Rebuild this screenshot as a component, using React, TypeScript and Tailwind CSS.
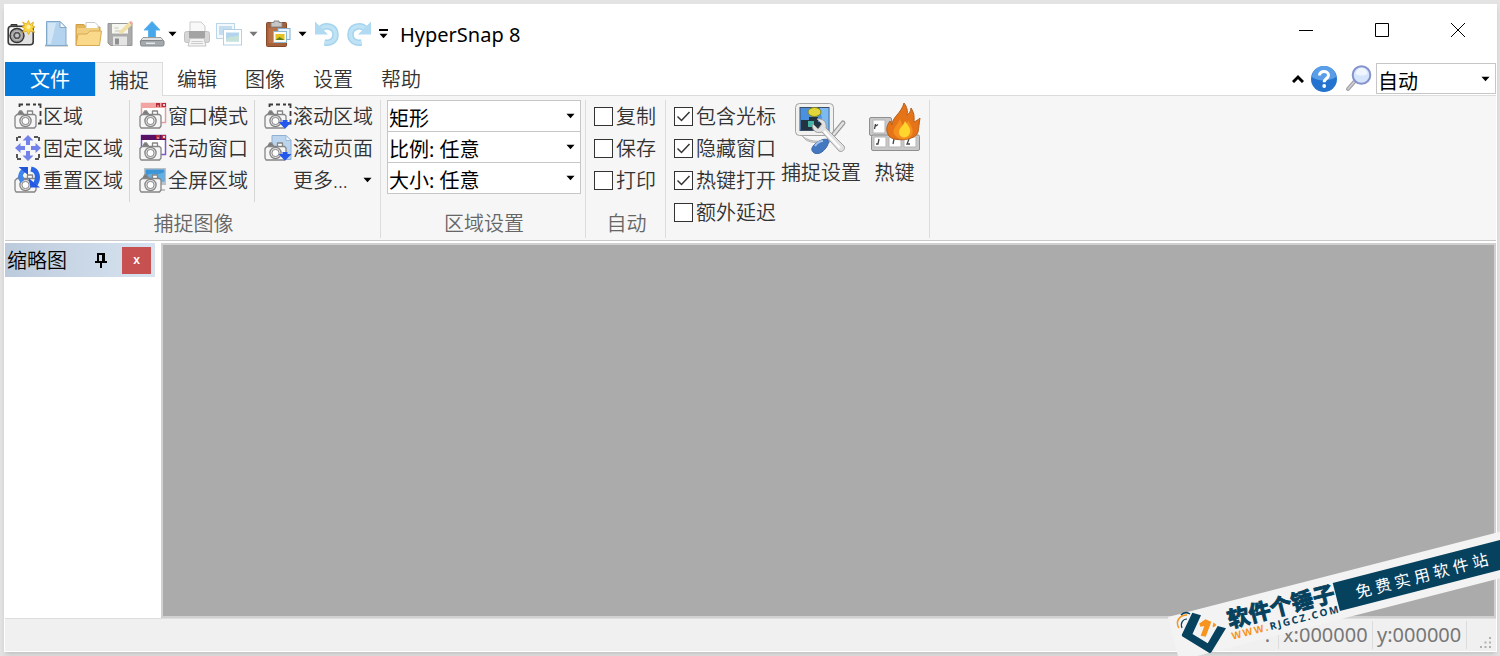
import type { ReactNode } from 'react'

const tabs = ['编辑', '图像', '设置', '帮助']

/* ---------- small glyphs ---------- */

function Caret({ className = 'text-black' }: { className?: string }) {
  return (
    <svg viewBox="0 0 10 6" className={`w-[9px] h-[6px] shrink-0 ${className}`} fill="currentColor">
      <path d="M0.5 0.5h9L5 5.6z" />
    </svg>
  )
}

function Icon({ children, size = 'size-7' }: { children: ReactNode; size?: string }) {
  return (
    <svg viewBox="0 0 28 28" className={`${size} shrink-0`} fill="none">
      {children}
    </svg>
  )
}

// outline camera shared by all the capture commands
function Camera() {
  return (
    <g stroke="#858585" strokeWidth="1.3" strokeLinejoin="round">
      <rect x="13.500" y="9" width="5" height="4" fill="#fff" />
      <path d="M4 12l1.600-3h2L9.600 12z" fill="#777" />
      <path d="M3 12.500h17.500l1.500 1.500v10l-1.500 2H2l-1-2V14.500z" fill="#f6f6f6" />
      <circle cx="11.500" cy="19" r="5.600" fill="#e4e4e4" />
      <circle cx="11.500" cy="19" r="3.600" fill="#fff" strokeWidth="1" />
    </g>
  )
}

const Dashes = () => (
  <path
    d="M5.500 5V2.500H9M12 2.500h4M19 2.500h3M24 2.500h2.500V6M26.500 9v5M26.500 17.500v4H24"
    stroke="#3c3c3c"
    strokeWidth="1.8"
  />
)

const DownArrow = () => <path d="M14.500 20h4v-2h5v2h4L21 26.800z" fill="#2457ec" />

const RegionIcon = () => (
  <Icon>
    <Dashes />
    <Camera />
  </Icon>
)

const FixedIcon = () => (
  <Icon>
    <path
      d="M3 7V3h4M20 3h5v4M25 20v5h-5M7 25H3v-5"
      stroke="#555"
      strokeWidth="2"
      strokeDasharray="4 1"
    />
    <path
      d="M14 1l5.500 5.500h-3.500v4.500h-4V6.500H8.500zM14 27l5.500-5.500h-3.500V17h-4v4.500H8.500zM1 14l5.500-5v3H11v4H6.500v3zM27 14l-5.500-5v3H17v4h4.500v3z"
      fill="#7382ea"
    />
  </Icon>
)

const RepeatIcon = () => (
  <Icon>
    <Camera />
    <path d="M12 3C6 6 5 11 8.500 15.500" stroke="#3f86ee" strokeWidth="4.500" />
    <path d="M4.500 1h9.500v8z" fill="#2457d8" />
    <path d="M17 3c7 1.500 8 9 4.500 15" stroke="#2a66e8" strokeWidth="5" />
    <path d="M14.500 12l2 9.500h9.500z" fill="#2457e4" />
  </Icon>
)

function WindowIcon({ bar, edge }: { bar: string; edge: string }) {
  return (
    <Icon>
      <rect x="2.500" y="1.500" width="24" height="19" fill="#fff" stroke={edge} strokeWidth="1.500" />
      <path d="M2 1h25v5H2z" fill={bar} />
      <path d="M17 1h4v4h-4zM22.500 1h4.500v4h-4.500z" fill="#b52b3b" />
      <path d="M18 4h2M24 2l2 2M26 2l-2 2" stroke="#fff" strokeWidth=".8" />
      <Camera />
    </Icon>
  )
}

const ScreenIcon = () => (
  <Icon>
    <path d="M5 2h22v17H5z" fill="#b9c2c9" />
    <path d="M6.500 3.500h19v12h-19z" fill="#3c95d6" />
    <path d="M8 9c6-3 11 1 17-3v9H8z" fill="#62b0e4" />
    <path d="M17 19h5v4h4v2H15z" fill="#c4c4c4" />
    <Camera />
  </Icon>
)

const ScrollRegionIcon = () => (
  <Icon>
    <Dashes />
    <Camera />
    <DownArrow />
  </Icon>
)

const ScrollPageIcon = () => (
  <Icon>
    <path d="M8 1.500h14l5 5v19H8z" fill="#bcd5ee" stroke="#8eb0d2" />
    <path d="M22 1.500v5h5z" fill="#f2f8fd" stroke="#8eb0d2" strokeWidth=".8" />
    <Camera />
    <DownArrow />
  </Icon>
)

/* ---------- quick access icons ---------- */

const AppIcon = () => (
  <Icon>
    <path d="M4 7V4.500h6V7" fill="#777" stroke="#333" />
    <rect x="1.200" y="6.200" width="25" height="18.500" rx="3" fill="#e2e2e2" stroke="#3a3a3a" strokeWidth="1.600" />
    <path d="M3 9h20" stroke="#fff" strokeWidth="1.500" />
    <circle cx="10" cy="15.500" r="7" fill="#a2a2a2" stroke="#333" strokeWidth="1.400" />
    <circle cx="10" cy="15.500" r="4.300" fill="#555" stroke="#ccc" />
    <circle cx="10" cy="15.500" r="2" fill="#c4c4c4" />
    <path
      d="M21.500 .5l1.500 4 3.500-2.500-1 4 2.500 1-2.500 1.500 2 4-4-1.500-2 3.500-2-3.500-4 1.500 2-4-2.500-1.500 2.500-1.500-2-3.500 4 2z"
      fill="#fbd545"
      stroke="#d5a013"
      strokeWidth=".7"
    />
    <circle cx="21.500" cy="7" r="2" fill="#fff3a8" />
  </Icon>
)

const NewIcon = () => (
  <Icon>
    <path d="M3 25.500h23" stroke="#a8b4bd" strokeWidth="2" />
    <path d="M4.500 1.500h13.500l6 6V25.500H4.500z" fill="#b3d3ef" stroke="#82a9c9" />
    <path d="M6 3h8L9 24H6z" fill="#d3e6f6" />
    <path d="M18 1.500v6h6z" fill="#f3f9fe" stroke="#82a9c9" />
  </Icon>
)

const OpenIcon = () => (
  <Icon>
    <path d="M2 25V4.500h8l2 2.500h14v6z" fill="#e3b558" stroke="#cf9f48" />
    <path d="M12 2.500h9l3 3V12H12z" fill="#fff" stroke="#c9c9c9" />
    <path d="M3 8h22v8H3z" fill="#f2cf80" />
    <path d="M2 25.500L4 14h9l3-3h11.500l-2 14.500z" fill="#fad98a" stroke="#d9a94f" />
  </Icon>
)

const SaveIcon = () => (
  <Icon>
    <path d="M2 3.500h24v22H4.500L2 23z" fill="#ababab" stroke="#969696" />
    <path d="M6 4h16v9.500H6z" fill="#f6f6f0" />
    <path d="M7 16.500h14v9H7z" fill="#e4e4e4" />
    <path d="M9 18.500h4v6H9z" fill="#8f8f8f" />
    <path d="M8.500 8h4M9 11h6" stroke="#c6c6b0" />
    <path d="M13 12L23 2l3 3-9 8-4 1z" fill="#f1dfa4" />
    <path d="M23 2l2-1 2 2-1 2z" fill="#f0a8a0" />
  </Icon>
)

const UploadIcon = () => (
  <Icon>
    <path d="M14 1.500l8 8.500h-4.500v8h-7v-8H6z" fill="#46a8ea" stroke="#5fb2ea" />
    <path d="M5 17.500h18l3 4H2z" fill="#e0e0e0" stroke="#9c9c9c" />
    <rect x="2.500" y="20.500" width="23.500" height="5.500" rx="1.500" fill="#a3a9ad" stroke="#81878b" />
    <path d="M8 23.300h9" stroke="#e4e9eb" strokeWidth="1.500" />
  </Icon>
)

const PrintIcon = () => (
  <Icon>
    <path d="M7 2h11l4 4v6H7z" fill="#f8f8f8" stroke="#cbcbcb" />
    <rect x="1.500" y="11.500" width="25" height="11" rx="2" fill="#d6d6d6" stroke="#c0c0c0" />
    <path d="M6 11h16v7H6z" fill="#a3a3a3" />
    <path d="M7 18.500h14l2 7.500H5z" fill="#f4f4f4" stroke="#c5c5c5" />
    <path d="M8.500 21.500h11M8 23.500h12" stroke="#ccc" />
  </Icon>
)

const WindowsIcon = () => (
  <Icon>
    <rect x="1.500" y="3.500" width="18" height="15" fill="#f2f8fc" stroke="#bcd6e9" />
    <path d="M4 6h13v9H4z" fill="#c5deef" />
    <rect x="8.500" y="9.500" width="18" height="15.500" fill="#fff" stroke="#b4d0e5" />
    <path d="M11 12.500h13v9H11z" fill="#b2d4ec" />
    <path d="M11 19c5-4 8-1 13-4v6.500H11z" fill="#c7e2d9" />
  </Icon>
)

const PasteIcon = () => (
  <Icon>
    <rect x="2.500" y="2.500" width="20" height="24" rx="1" fill="#a5613a" stroke="#864a28" />
    <path d="M4.500 8h15v15h-15z" fill="#b87148" />
    <path d="M7 2.500h3V1h5v1.500h3V7H7z" fill="#c7c7c7" stroke="#858585" />
    <rect x="14" y="8.500" width="12" height="11" fill="#e8f3fb" stroke="#7fb1d7" />
    <rect x="9.500" y="11.500" width="13" height="11" fill="#fffdf2" stroke="#8fb8d5" />
    <path d="M11.500 14h9v6h-9z" fill="#e4c321" />
    <path d="M11.500 20l4-3 5 3z" fill="#5d7d1f" />
  </Icon>
)

const UndoIcon = () => (
  <Icon>
    <path d="M7 9.500C12 4 22.500 6 22.500 14.500c0 6.500-5 9-11 8" stroke="#a5d4ee" strokeWidth="6.500" />
    <path d="M7 9.500C12 4 22.500 6 22.500 14.500c0 6.500-5 9-11 8" stroke="#bfe2f5" strokeWidth="3.500" />
    <path d="M2 1.500V14.500h13z" fill="#b0daf1" />
  </Icon>
)

const RedoIcon = () => (
  <Icon>
    <path d="M21 9.500C16 4 5.500 6 5.500 14.500c0 6.500 5 9 11 8" stroke="#a5d4ee" strokeWidth="6.500" />
    <path d="M21 9.500C16 4 5.500 6 5.500 14.500c0 6.500 5 9 11 8" stroke="#bfe2f5" strokeWidth="3.500" />
    <path d="M26 1.500V14.500H13z" fill="#b0daf1" />
  </Icon>
)

/* ---------- big ribbon icons ---------- */

const CaptureSettingsIcon = () => (
  <svg viewBox="0 0 52 52" className="size-[52px]" fill="none">
    <path d="M7 33c8 7 24 7 31 0l-4 5c-7 3-18 2-23-1z" fill="#dadada" stroke="#b5b5b5" />
    <rect x="0.500" y="0.500" width="38" height="32" rx="4" fill="#f1f1ef" stroke="#a3a3a3" />
    <rect x="5" y="4.500" width="29" height="23" fill="#4a90de" stroke="#3d4f66" />
    <path d="M25 5h8.500v22H29z" fill="#7dbaf0" />
    <ellipse cx="19.500" cy="9" rx="6.500" ry="4.500" fill="#e2d63a" stroke="#7f8422" />
    <path d="M6 17h8v-3h9v5h5v8H6z" fill="#23333f" />
    <path d="M13 18h6v6h-6z" fill="#43b3a5" />
    <path d="M48 20l-14 17" stroke="#9a9a9a" strokeWidth="5" strokeLinecap="round" />
    <path d="M48 20l-14 17" stroke="#e3e3e3" strokeWidth="2.500" strokeLinecap="round" />
    <path d="M33 37c2 3-3 11-8 13-6 2-9-2-8-5 2-5 12-11 16-8z" fill="#4479c2" stroke="#3a66a6" />
    <path d="M20 43c2-3 5-5 8-5" stroke="#a6c4ea" strokeWidth="2" />
    <path
      d="M18 21c-2 6 3 10 9 8l17 19c3 2 7-2 5-5L31 25c1-6-3-10-9-9l5 5-4 5z"
      fill="#e2e2e2"
      stroke="#a0a0a0"
    />
    <path d="M29 28l16 17" stroke="#fff" strokeWidth="2" />
  </svg>
)

const HotkeyIcon = () => (
  <svg viewBox="0 0 52 52" className="size-[52px]" fill="none">
    <rect x="0.500" y="14.500" width="22" height="18" rx="1.500" fill="#c8c8c8" stroke="#8f8f8f" />
    <rect x="2.500" y="32" width="48" height="15.500" rx="1.500" fill="#c8c8c8" stroke="#8f8f8f" />
    <path d="M4 17h12v13H4zM5 34h12v10H5zM20 34h12v10H20zM35 34h12v10H35z" fill="#fff" stroke="#b5b5b5" />
    <path d="M6.500 21l-1 5M6 23.500l3-2M10 36l-1 5h-2M25 36l-1 5M40 36l-2 5h3" stroke="#444" strokeWidth="1.300" />
    <path
      d="M20 33c-4-6-2-11 1-15l2 4c0-8 9-11 12-22 3 4 4 8 3 12 2-1 4-4 4-7 4 6 3 10 3 14 2-1 4-2 6-4-1 6-1 9-2 14-2 9-25 10-29 4z"
      fill="#e57318"
      stroke="#b5601c"
    />
    <path d="M25 31c-2-6 3-8 6-15 2 4 2 7 3 9 3-2 4-4 5-8 4 7 8 13 1 18-5 3-12 1-15-4z" fill="#f58e1d" />
    <path d="M30 30c0-6 4-6 6-12 4 6 7 8 4 14-3 4-9 3-10-2z" fill="#ffd52e" />
  </svg>
)

/* ---------- ribbon pieces ---------- */

function Command({ icon, label }: { icon: ReactNode; label: string }) {
  return (
    <button type="button" className="flex h-8 items-center gap-px whitespace-nowrap">
      {icon}
      <span className="pt-0.5">{label}</span>
    </button>
  )
}

function Combo({ name, value, className = '' }: { name: string; value: string; className?: string }) {
  return (
    <div className={`relative flex items-center border border-[#c6c6c6] bg-white text-black ${className}`}>
      <select
        aria-label={name}
        className="h-full w-full appearance-none bg-transparent px-px pt-1 font-normal outline-none"
      >
        <option>{value}</option>
      </select>
      <span className="pointer-events-none absolute right-[5px]">
        <Caret />
      </span>
    </div>
  )
}

function Check({ label, checked = false }: { label: string; checked?: boolean }) {
  return (
    <label className="flex h-8 items-center gap-[3px] whitespace-nowrap">
      <span className="relative flex">
        <input
          type="checkbox"
          defaultChecked={checked}
          className="peer size-[19px] appearance-none border border-[#333] bg-white"
        />
        <svg
          viewBox="0 0 19 19"
          className="pointer-events-none absolute inset-0 hidden size-[19px] peer-checked:block"
          fill="none"
        >
          <path d="M3.500 9.500l4 4 8-8.500" stroke="#333" strokeWidth="1.500" />
        </svg>
      </span>
      <span className="pt-0.5">{label}</span>
    </label>
  )
}

function Group({ title, children, className = '' }: { title?: string; children: ReactNode; className?: string }) {
  return (
    <section className={`flex flex-col justify-between border-r border-[#dcdcdc] ${className}`}>
      {children}
      {title && <h2 className="pl-0.5 pt-px text-center leading-7 text-[#666]">{title}</h2>}
    </section>
  )
}

function TitleBar() {
  const tool = 'flex w-8 justify-center'
  return (
    <header className="flex h-[57px] items-start justify-between">
      <div className="flex h-[58px] items-center">
        <span className="mr-1 flex w-[31px] justify-center"><AppIcon /></span>
        <button type="button" aria-label="新建" className={tool}><NewIcon /></button>
        <button type="button" aria-label="打开" className={tool}><OpenIcon /></button>
        <button type="button" aria-label="保存" className={tool}><SaveIcon /></button>
        <button type="button" aria-label="上传" className={tool}><UploadIcon /></button>
        <button type="button" aria-label="上传选项" className="mr-1 flex"><Caret /></button>
        <button type="button" aria-label="打印" className={tool}><PrintIcon /></button>
        <button type="button" aria-label="复制窗口" className={tool}><WindowsIcon /></button>
        <button type="button" aria-label="窗口选项" className="mx-1 flex"><Caret className="text-[#777]" /></button>
        <button type="button" aria-label="粘贴" className={tool}><PasteIcon /></button>
        <button type="button" aria-label="粘贴选项" className="mx-1 flex"><Caret /></button>
        <button type="button" aria-label="撤销" className={tool}><UndoIcon /></button>
        <button type="button" aria-label="重做" className={tool}><RedoIcon /></button>
        <button type="button" aria-label="自定义工具栏" className="ml-1 flex flex-col items-center gap-0.5">
          <span className="h-0.5 w-[9px] bg-black" />
          <Caret />
        </button>
        <h1 className="ml-3 pt-0.5 font-normal text-black">HyperSnap 8</h1>
      </div>
      <div className="flex h-[50px]">
        {[
          ['最小化', 'M2 7.500h14'],
          ['最大化', 'M2.500 .5h13v13h-13z'],
          ['关闭', 'M2 0l14 14M16 0L2 14'],
        ].map(([name, d]) => (
          <button key={name} type="button" aria-label={name} className="flex w-[76px] items-center justify-center">
            <svg viewBox="0 0 18 14" className="h-[14px] w-[18px]" fill="none" stroke="#000">
              <path d={d} />
            </svg>
          </button>
        ))}
      </div>
    </header>
  )
}

function TabRow() {
  return (
    <nav className="flex h-[34px] items-stretch">
      <button type="button" className="w-[90px] bg-[#0579d9] pt-0.5 font-normal text-white">文件</button>
      <button type="button" className="w-[68px] border-x border-t border-[#dcdcdc] bg-[#f6f6f6] pt-0.5">捕捉</button>
      <div className="flex flex-1 border-b border-[#dcdcdc]">
        {tabs.map((t) => (
          <button key={t} type="button" className="w-[68px] pt-0.5">{t}</button>
        ))}
        <div className="ml-auto flex items-center">
          <button type="button" aria-label="折叠功能区" className="mr-1.5">
            <svg viewBox="0 0 12 9" className="h-[9px] w-3" fill="none">
              <path d="M1 8l5-5 5 5" stroke="#000" strokeWidth="3" />
            </svg>
          </button>
          <button type="button" aria-label="帮助" className="mr-1.5">
            <Icon>
              <circle cx="14" cy="14" r="13" fill="#2373cf" />
              <path d="M2 12a12 11 0 0124 0C20 16 8 17 2 12z" fill="#5a9ee8" />
              <path
                d="M9.500 10.500C9.500 5 18.500 5.500 18.500 10.200c0 3.300-4.300 3.300-4.300 7"
                stroke="#fff"
                strokeWidth="3"
              />
              <circle cx="14.200" cy="21" r="1.900" fill="#fff" />
            </Icon>
          </button>
          <button type="button" aria-label="缩放" className="mr-1">
            <Icon>
              <path d="M4 24l7-8" stroke="#a2a2a8" strokeWidth="4" strokeLinecap="round" />
              <path d="M4 24l7-8" stroke="#cfcfd3" strokeWidth="1.500" strokeLinecap="round" />
              <circle cx="17.500" cy="10" r="8.800" fill="#d5e5fb" stroke="#8592cc" strokeWidth="2" />
              <path d="M11.500 9a6 6 0 0112 0c-4 2-8 2-12 0z" fill="#f0f6ff" />
            </Icon>
          </button>
          <Combo name="缩放比例" value="自动" className="h-[31px] w-[120px]" />
        </div>
      </div>
    </nav>
  )
}

function Ribbon() {
  return (
    <div className="flex h-[145px] border-b border-[#c9c9c9] bg-[#f6f6f6] pb-0.5 pt-1">
      <Group title="捕捉图像">
        <div className="flex">
          <div className="w-[125px] border-r border-[#d6d6d6] pb-1.5 pl-[9px]">
            <Command icon={<RegionIcon />} label="区域" />
            <Command icon={<FixedIcon />} label="固定区域" />
            <Command icon={<RepeatIcon />} label="重置区域" />
          </div>
          <div className="w-[125px] border-r border-[#d6d6d6] pb-1.5 pl-[9px]">
            <Command icon={<WindowIcon bar="#f3a4a2" edge="#e0a0a0" />} label="窗口模式" />
            <Command icon={<WindowIcon bar="#5a1064" edge="#7a5ac4" />} label="活动窗口" />
            <Command icon={<ScreenIcon />} label="全屏区域" />
          </div>
          <div className="w-[125px] pl-[9px]">
            <Command icon={<ScrollRegionIcon />} label="滚动区域" />
            <Command icon={<ScrollPageIcon />} label="滚动页面" />
            <button type="button" className="flex h-8 w-full items-center justify-between pl-[29px] pr-2">
              <span className="pt-0.5">更多...</span>
              <Caret />
            </button>
          </div>
        </div>
      </Group>
      <Group title="区域设置" className="w-[205px]">
        <div className="flex flex-col pl-1.5 pr-1">
          <Combo name="形状" value="矩形" className="h-8" />
          <Combo name="比例" value="比例: 任意" className="-mt-px h-8" />
          <Combo name="大小" value="大小: 任意" className="-mt-px h-8" />
        </div>
      </Group>
      <Group title="自动" className="w-20">
        <div className="pl-2">
          <Check label="复制" />
          <Check label="保存" />
          <Check label="打印" />
        </div>
      </Group>
      <Group className="pl-2">
        <div className="flex">
          <div className="w-[108px]">
            <Check label="包含光标" checked />
            <Check label="隐藏窗口" checked />
            <Check label="热键打开" checked />
            <Check label="额外延迟" />
          </div>
          <button type="button" className="flex w-[78px] flex-col items-center gap-1 whitespace-nowrap pt-[3px]">
            <CaptureSettingsIcon />
            捕捉设置
          </button>
          <button type="button" className="flex w-[69px] flex-col items-center gap-1 pt-[3px]">
            <HotkeyIcon />
            热键
          </button>
        </div>
      </Group>
    </div>
  )
}

function Thumbnails() {
  return (
    <aside className="w-[156px] shrink-0 bg-white pr-1.5">
      <div className="flex h-[34px] items-center bg-gradient-to-r from-[#bccbdc] to-[#d7e3f0] pl-0.5 pr-1 text-black">
        <h2 className="pt-0.5">缩略图</h2>
        <button type="button" aria-label="固定" className="ml-auto mr-3.5">
          <svg viewBox="0 0 14 16" className="h-4 w-3.5" fill="none" stroke="#000" strokeWidth="2">
            <path d="M4 9V2h6v7M9 2v7M1 10h12M7 10v6" />
          </svg>
        </button>
        <button
          type="button"
          aria-label="关闭"
          className="flex h-[27px] w-[29px] items-center justify-center bg-[#c75050] text-xs font-semibold text-white"
        >
          x
        </button>
      </div>
    </aside>
  )
}

function StatusBar() {
  return (
    <footer className="flex h-[33px] shrink-0 items-center justify-end border-t border-[#dedede] bg-[#f0f0f0] font-normal text-[#777]">
      <span className="pr-2">:</span>
      <span className="w-[94px] border-l border-[#dcdcdc] pl-1">x:000000</span>
      <span className="w-[94px] border-l border-[#dcdcdc] pl-1">y:000000</span>
      <span className="flex h-7 w-[30px] items-end justify-end border-l border-[#dcdcdc] px-1">
        <svg viewBox="0 0 12 12" className="size-3" fill="#b0b0b0">
          <path d="M9 0h2v2H9zM9 4.500h2v2H9zM9 9h2v2H9zM4.500 4.500h2v2h-2zM4.500 9h2v2h-2zM0 9h2v2H0z" />
        </svg>
      </span>
    </footer>
  )
}

// diagonal ribbon laid over the lower right corner
function SiteBadge() {
  return (
    <div className="pointer-events-none absolute bottom-0 right-0 h-[125px] w-[332px] overflow-hidden">
      <div className="absolute left-0 top-[86px] flex h-[45px] w-[360px] origin-top-left rotate-[-14.4deg] items-start bg-[#f3f3f3]">
        <div className="w-[168px] shrink-0 whitespace-nowrap pl-[57px] pt-1.5 font-bold text-[#06415e]">
          <p className="text-[22px] leading-[22px] [-webkit-text-stroke:1px_#06415e]">软件个锤子</p>
          <p className="flex justify-between pr-px text-[10px] leading-[12px]">
            {[...'WWW.RJGCZ.COM'].map((c, i) => (
              <span key={i} className={i < 4 ? 'text-[#f7941d]' : ''}>{c}</span>
            ))}
          </p>
        </div>
        <p className="mt-2 flex h-[29px] flex-1 items-center gap-1 bg-[#06415e] pl-5 text-base font-normal text-white">
          {[...'免费实用软件站'].map((c) => (
            <span key={c}>{c}</span>
          ))}
        </p>
      </div>
      <svg viewBox="0 0 332 125" className="absolute inset-0" fill="none">
        <path d="M11 97c-4-6 0-13 8-13" stroke="#f7941d" strokeWidth="1.500" />
        <path d="M14 97c-2-5 1-9 5-9" stroke="#06415e" strokeWidth="1.200" />
        <path d="M13 84c3-3 6-3 9-1" stroke="#06415e" strokeWidth="1.500" />
        <path d="M24.300 81.700L33 84.300 24.500 103l15.200 9.300 10-17.300 8.300 2.300L43.500 121q-1 1.500-2.500 .8L14.500 105.500q-1-.7-.6-2z" fill="#06415e" />
        <path
          d="M31.300 92.500L37.500 88.300 43.200 90.700 42 94.500 37.700 105.700 32.700 104.700 36.300 95 32.300 95.700zM45.500 91.500l3 2.500-2.800 2.200-1.200-.6z"
          fill="#f7941d"
        />
      </svg>
    </div>
  )
}

export default function App() {
  return (
    <div className="relative h-screen overflow-hidden bg-[#e3e3e3] py-1 pl-1 pr-[3px] font-['Noto_Sans','Noto_Sans_CJK_SC',sans-serif] text-xl font-[350] leading-7 text-[#333]">
      <div className="flex h-full flex-col border border-white bg-white shadow-md">
        <TitleBar />
        <TabRow />
        <Ribbon />
        <main className="flex min-h-0 flex-1 pt-0.5">
          <Thumbnails />
          <div className="flex-1 border-2 border-[#d0d0d0] bg-[#ababab]" />
        </main>
        <StatusBar />
      </div>
      <SiteBadge />
    </div>
  )
}
